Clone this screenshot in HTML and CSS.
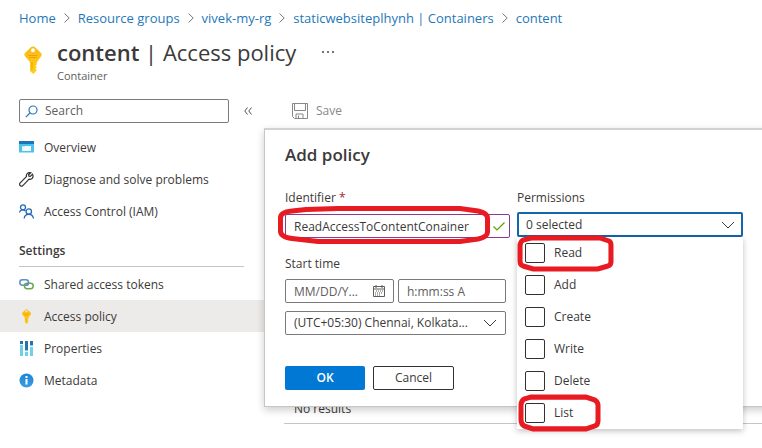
FILE: index.html
```html
<!DOCTYPE html>
<html lang="en">
<head>
<meta charset="utf-8">
<title>content | Access policy</title>
<link rel="stylesheet" href="styles.css">
</head>
<body>
<svg class="defs" aria-hidden="true">
  <defs>
    <linearGradient id="gold" x1="0" y1="0" x2="0" y2="1">
      <stop offset="0" stop-color="#fdb813"/><stop offset="1" stop-color="#fcd11b"/>
    </linearGradient>
    <linearGradient id="info" x1="0" y1="0" x2="0" y2="1">
      <stop offset="0" stop-color="#1b86d8"/><stop offset="1" stop-color="#3f9be0"/>
    </linearGradient>
  </defs>
  <symbol id="key" viewBox="0 0 18 28">
    <path fill="url(#gold)" fill-rule="evenodd" d="M7.500.8Q9 0 10.500.8L17 7q1.200 1.500.3 3l-4.500 6.200v2.200l-1.300 1.500 1.300 1.300-1.300 1.700 1.300 1.400L9.500 28 6 25V16.200L.8 10q-.9-1.500.2-3zM9 2.200a2 2 0 1 0 0 4 2 2 0 0 0 0-4z"/>
    <path stroke="#eda012" d="M4.500 9.500h9M5 11.500h8"/>
    <path stroke="#f2a20c" d="M8 16v8"/>
  </symbol>
  <symbol id="chevron" viewBox="0 0 14 8"><path d="M1 1l6 6 6-6" fill="none" stroke="#3b3a39"/></symbol>
  <symbol id="crumb" viewBox="0 0 6 10"><path d="M.5.5L5.200 5 .5 9.500" fill="none" stroke="#77777a"/></symbol>
</svg>

<header class="header">
  <nav class="crumbs" aria-label="Breadcrumb">
    <a href="#">Home</a><svg class="sep"><use href="#crumb"/></svg>
    <a href="#">Resource groups</a><svg class="sep"><use href="#crumb"/></svg>
    <a href="#">vivek-my-rg</a><svg class="sep"><use href="#crumb"/></svg>
    <a href="#">staticwebsiteplhynh | Containers</a><svg class="sep"><use href="#crumb"/></svg>
    <a href="#">content</a>
  </nav>
  <div class="heading">
    <svg class="heading-key"><use href="#key"/></svg>
    <div>
      <div class="title-row">
        <h1><strong>content</strong> | Access policy</h1>
        <button class="more" aria-label="More">
          <svg width="12" height="2"><path d="M0 0h2v2H0zM5 0h2v2H5zM10 0h2v2h-2z" fill="#77777a"/></svg>
        </button>
      </div>
      <p class="kind">Container</p>
    </div>
  </div>
</header>

<div class="body">
  <aside class="sidebar">
    <div class="search-row">
      <div class="search">
        <svg width="13" height="13" viewBox="0 0 13 13" fill="none" stroke="#2a78b8" stroke-width="1.200"><circle cx="8" cy="5" r="4"/><path d="M5 8L.8 12.200"/></svg>
        <input type="search" placeholder="Search" aria-label="Search">
      </div>
      <button class="collapse" aria-label="Collapse menu">
        <svg width="8" height="8" viewBox="0 0 8 8" fill="none" stroke="#55555a"><path d="M3.500.5L.8 4l2.700 3.500M7.500.5L4.800 4l2.700 3.500"/></svg>
      </button>
    </div>
    <nav class="menu">
      <a href="#">
        <svg width="15" height="15" viewBox="0 0 15 15"><path fill="#4cc4e8" d="M0 3h15v9.500H0z"/><path fill="#1b76bb" d="M0 1h15v3H0z"/><path fill="#f3fbfe" d="M3 6h9v5H3z"/><path fill="#bfe9f6" d="M3 6h3v1H3z"/></svg>
        Overview</a>
      <a href="#">
        <svg width="15" height="15" viewBox="0 0 15 15" fill="none" stroke="#323130" stroke-width="1.200"><path d="M13.500 2.200l-2.200 2.200-1.400-.2-.3-1.500L11.800.8C9 0 7 1.800 7.400 4.600L1 11.200c-1.200 1.500.9 3.900 2.600 2.600l6.500-6.600c2.700.6 5-1.700 3.400-5z"/></svg>
        Diagnose and solve problems</a>
      <a href="#">
        <svg width="15" height="15" viewBox="0 0 15 15" fill="none" stroke="#2569b8" stroke-width="1.300"><circle cx="4" cy="3.300" r="2.500"/><path d="M.6 8.500C.8 5.300 5 5 6.500 7.200"/><circle cx="9.800" cy="7.500" r="2.700"/><path d="M5.200 14.500c.3-5.500 8.800-5.500 9.200 0"/></svg>
        Access Control (IAM)</a>
    </nav>
    <h2 class="group">Settings</h2>
    <nav class="menu">
      <a href="#">
        <svg width="15" height="15" viewBox="0 0 15 15" fill="none" stroke-width="1.500"><rect x=".8" y="2.800" width="8.700" height="5.400" rx="2.700" stroke="#5b8fc7"/><rect x="5.500" y="6.300" width="8.700" height="5.400" rx="2.700" stroke="#6aa84f"/><path d="M6.500 8.200h1q2 0 2-2.500" stroke="#5b8fc7"/></svg>
        Shared access tokens</a>
      <a href="#" class="current" aria-current="page">
        <svg width="15" height="15"><use href="#key"/></svg>
        Access policy</a>
      <a href="#">
        <svg width="15" height="15" viewBox="0 0 15 15"><path fill="#70d0e6" d="M1 0h3v15H1zM6 0h3v15H6zM11 0h3v15h-3z"/><path fill="#2872a6" d="M1 0h3v4H1zM6 0h3v9H6zM11 0h3v4h-3z"/><path fill="#e3f5fa" d="M1 3h3v1H1zM6 10h3v1H6zM11 5h3v1h-3z"/></svg>
        Properties</a>
      <a href="#">
        <svg width="15" height="15" viewBox="0 0 15 15"><circle cx="7.500" cy="7.500" r="7" fill="url(#info)"/><path fill="#fff" d="M6.500 6h2v5.500h-2zM6.500 3h2v2h-2z"/></svg>
        Metadata</a>
    </nav>
  </aside>

  <main class="main">
    <div class="toolbar">
      <button class="save" disabled>
        <svg width="16" height="16" viewBox="0 0 16 16" fill="none" stroke="#8a8886"><path d="M.5.5h15v15H2.500l-2-2zM2.500.5V7.500h11V.5M4 15.500V11h7v4.500M6.500 12.500V15"/></svg>
        Save</button>
    </div>
    <p class="empty">No results</p>

    <section class="dialog" role="dialog" aria-labelledby="dialog-title">
      <h2 id="dialog-title">Add policy</h2>
      <form class="form">
        <div class="column">
          <label for="identifier">Identifier <span class="required">*</span></label>
          <div class="field identifier">
            <input id="identifier" type="text" value="ReadAccessToContentConainer">
            <svg width="12" height="9" viewBox="0 0 12 9" fill="none" stroke="#57a300" stroke-width="1.200"><path d="M.5 4.500L4 8 11.500.5"/></svg>
            <svg class="mark mark-id" viewBox="0 0 212 38" preserveAspectRatio="none"><path d="M28 3.500L60 2.500H182L200 5Q209.500 7 209.500 12V26Q209.500 31 200 33L182 35.500H40L14 32.500Q2.500 31 2.500 25V12Q2.500 6 14 5z"/></svg>
          </div>
          <label class="start" for="date">Start time</label>
          <div class="times">
            <div class="field">
              <input id="date" type="text" placeholder="MM/DD/Y...">
              <svg width="12" height="12" viewBox="0 0 12 12" fill="none" stroke="#605e5c"><path d="M.5 1.500h11v10H.5zM.5 4h11M3 0v3M9 0v3"/><path stroke-dasharray="1 1" d="M3 6h7M2 8h8M2 10h6"/></svg>
            </div>
            <div class="field"><input type="text" placeholder="h:mm:ss A" aria-label="Time"></div>
          </div>
          <div class="field zone">
            <select aria-label="Time zone"><option>(UTC+05:30) Chennai, Kolkata...</option></select>
            <svg class="chevron"><use href="#chevron"/></svg>
          </div>
        </div>
        <div class="column">
          <label for="permissions">Permissions</label>
          <div class="field permissions">
            <select id="permissions"><option>0 selected</option></select>
            <svg class="chevron"><use href="#chevron"/></svg>
            <div class="options">
              <label><input type="checkbox">Read
                <svg class="mark mark-read" viewBox="0 0 96 37" preserveAspectRatio="none"><path d="M14 3H82L91 6Q93 7 93 10V27Q93 30 90 31L80 34H16L6 31Q3 30 3 26V11Q3 7 6 5z"/></svg></label>
              <label><input type="checkbox">Add</label>
              <label><input type="checkbox">Create</label>
              <label><input type="checkbox">Write</label>
              <label><input type="checkbox">Delete</label>
              <label><input type="checkbox">List
                <svg class="mark mark-list" viewBox="0 0 83 37" preserveAspectRatio="none"><path d="M13 3H68L77 6Q80 8 80 11V26Q80 30 77 31L68 34H15L6 31Q3 29 3 25V11Q3 7 6 5z"/></svg></label>
            </div>
          </div>
        </div>
      </form>
      <div class="actions">
        <button class="ok">OK</button>
        <button class="cancel">Cancel</button>
      </div>
    </section>
  </main>
</div>
</body>
</html>
```
FILE: styles.css
```css
* { box-sizing: border-box; }

body {
  margin: 0;
  min-height: 100vh;
  overflow: hidden;
  background: #fff;
  color: #3b3a39;
  font: 12px/16px "Open Sans", "Noto Sans", sans-serif;
}

h1, h2, p { margin: 0; }
a { color: inherit; text-decoration: none; }
svg { flex: none; display: block; }
button, input, select { font: inherit; color: inherit; }
button { padding: 0; border: 0; background: none; }
.defs { position: absolute; width: 0; height: 0; }

.crumbs {
  display: flex;
  align-items: center;
  height: 36px;
  padding-left: 19px;
  color: #1f78b8;
  font-size: 13px;
  white-space: nowrap;
}
.sep { width: 6px; height: 10px; margin: 0 8px; }

.heading {
  display: flex;
  gap: 15px;
  height: 55px;
  padding-left: 24px;
}
.heading-key { width: 18px; height: 28px; margin-top: 10px; }
.title-row { display: flex; align-items: center; gap: 26px; height: 32px; }
.title-row h1 { font-size: 22px; line-height: 32px; font-weight: 400; white-space: nowrap; }
.title-row strong { font-weight: 600; }
.kind { color: #605e5c; font-size: 11px; }

.body { display: grid; grid-template-columns: 264px minmax(0, 1fr); }

.search-row {
  display: flex;
  align-items: center;
  gap: 15px;
  padding: 8px 0 8px 19px;
}
.search {
  display: flex;
  align-items: center;
  gap: 7px;
  width: 210px;
  height: 24px;
  padding-left: 5px;
  border: 1px solid #7a7a7e;
  border-radius: 2px;
}
.search input { flex: 1; min-width: 0; padding: 0; border: 0; outline: 0; background: none; appearance: none; }
input::placeholder { color: #605e5c; opacity: 1; }

.menu a {
  display: flex;
  align-items: center;
  gap: 10px;
  height: 32px;
  padding: 1px 0 0 19px;
}
.menu .current { background: #edebe9; }
.group {
  margin: 8px 20px 1px 19px;
  padding: 8px 0 7px;
  border-bottom: 1px solid #c8c6c4;
  font-size: 12px;
  line-height: 16px;
  font-weight: 600;
}

.main { position: relative; padding-left: 20px; }
.toolbar { display: flex; height: 38px; padding-left: 8px; border-bottom: 1px solid #d2d0ce; }
.save { display: flex; align-items: center; gap: 8px; height: 38px; padding-top: 2px; color: #8a8886; }
.empty { padding: 272px 0 6px 10px; border-bottom: 1px solid #c8c6c4; }

.dialog {
  position: absolute;
  top: 37px;
  left: 0;
  right: -20px;
  padding: 14px 39px 16px 20px;
  border: 1px solid #c8c6c4;
  border-top: 2px solid #d2d2d2;
  background: #fff;
  box-shadow: 0 3px 8px rgba(0, 0, 0, .2);
}
.dialog h2 { font-size: 17px; line-height: 22px; font-weight: 600; }

.form {
  display: grid;
  grid-template-columns: 225px 226px;
  gap: 7px;
  padding-top: 24px;
}
.column > label { display: block; height: 16px; }
.required { color: #a4262c; }

.field {
  position: relative;
  display: flex;
  align-items: center;
  height: 24px;
  padding-right: 8px;
  border: 1px solid #7a7a7e;
  border-radius: 2px;
}
.field > input, .field > select {
  flex: 1;
  width: 0;
  min-width: 0;
  height: 22px;
  padding: 0 0 0 8px;
  border: 0;
  outline: 0;
  background: none;
  appearance: none;
}
.identifier { margin-top: 8px; padding-right: 4px; border-color: #8a3a91; }
.column > .start { margin-top: 18px; }
.times { display: grid; grid-template-columns: 109px 108px; gap: 4px; margin: 7px 4px 8px 0; }
.zone { margin-right: 4px; }
.chevron { width: 14px; height: 8px; }
.field > .chevron { pointer-events: none; }

.permissions { height: 25px; margin-top: 6px; padding-right: 6px; border: 2px solid #1266ab; }
.permissions > select { padding-left: 7px; }
.options {
  position: absolute;
  z-index: 1;
  top: 23px;
  left: -2px;
  right: -2px;
  background: #fff;
  box-shadow: 0 2px 6px rgba(0, 0, 0, .25);
}
.options label {
  position: relative;
  display: flex;
  align-items: center;
  gap: 9px;
  height: 32px;
  padding-left: 8px;
}
.options input {
  width: 20px;
  height: 20px;
  margin: 0;
  border: 1px solid #323130;
  border-radius: 2px;
  background: #fff;
  appearance: none;
}

.mark {
  position: absolute;
  z-index: 2;
  overflow: visible;
  pointer-events: none;
  fill: none;
  stroke: #e81b23;
  stroke-width: 5px;
}
.mark-id { left: -8px; top: -9px; width: 212px; height: 38px; }
.mark-read { left: 0; top: -2px; width: 97px; height: 37px; }
.mark-list { left: 1px; top: -3px; width: 83px; height: 38px; }

.actions { display: flex; gap: 8px; padding-top: 31px; }
.actions button { height: 24px; border-radius: 2px; }
.ok { width: 80px; background: #0078d4; color: #fff; font-weight: 600; }
.cancel { width: 81px; border: 1px solid #323130; }
```
